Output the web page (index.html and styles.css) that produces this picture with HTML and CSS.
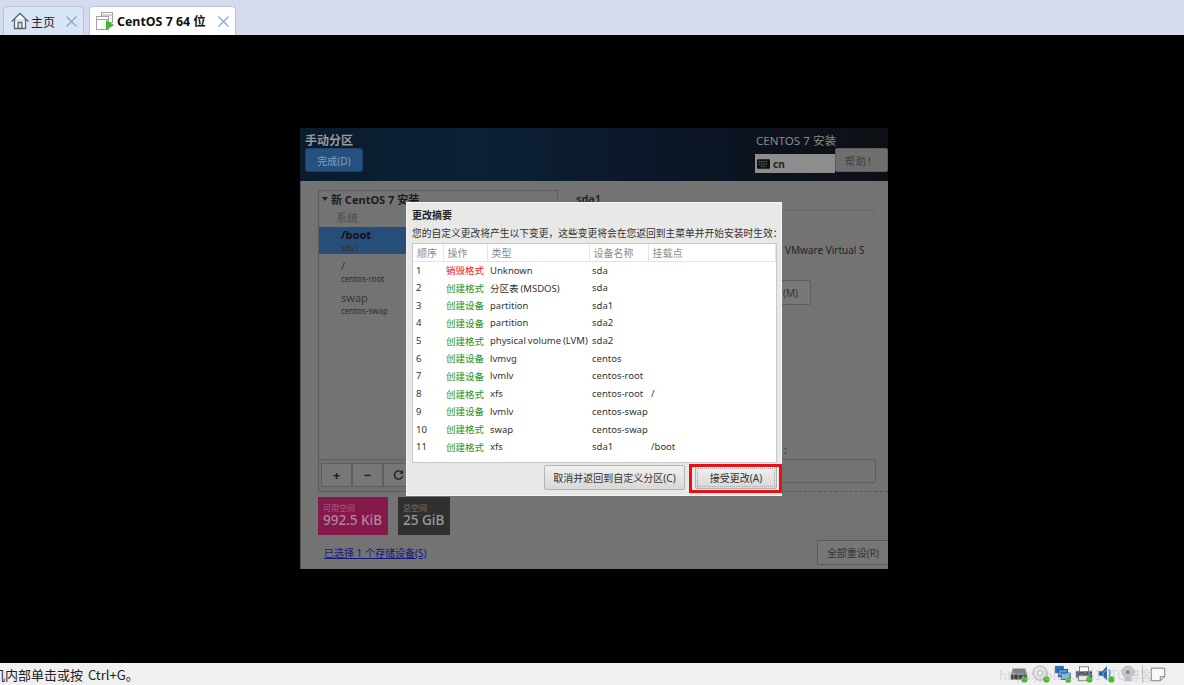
FILE: index.html
```html
<!DOCTYPE html>
<html lang="en">
<head>
    <meta charset="UTF-8">
    <meta name="viewport" content="width=device-width, initial-scale=1.0">
    <title>CentOS 7 64 位</title>
    <link rel="stylesheet" href="styles.css">
</head>
<body>
    <header class="tabbar">
        <div class="tab">
            <svg class="tab-icon" viewBox="0 0 18 18" width="18" height="18"><path d="M.7 9.500 9 1.500 17.300 9.500M3.500 7V16.500H14.500V7M7 16.500V10.500H11V16.500" fill="#fff" stroke="#5a6470" stroke-width="1.300"/></svg>
            <span class="tab-label">主页</span>
            <svg class="tab-close" viewBox="0 0 11 11" width="11" height="11"><path d="M.5.500 10.500 10.500M10.500.500.5 10.500" stroke="#86a5cc" stroke-width="1.200"/></svg>
        </div>
        <div class="tab tab-active">
            <svg class="tab-icon" viewBox="0 0 20 20" width="20" height="20"><rect x="6.500" y="1.500" width="11" height="10" fill="#fff" stroke="#a0a4aa"/><rect x="1.500" y="5.500" width="12" height="13" fill="#fff" stroke="#a0a4aa"/><path d="M1.500 8.500H13.500M6.500 4H17.500" stroke="#a0a4aa"/><path d="M11 9 19 14 11 19Z" fill="#3dbb2c"/></svg>
            <span class="tab-label tab-label-bold">CentOS 7 64 位</span>
            <svg class="tab-close" viewBox="0 0 11 11" width="11" height="11"><path d="M.5.500 10.500 10.500M10.500.500.5 10.500" stroke="#86a5cc" stroke-width="1.200"/></svg>
        </div>
    </header>

    <main class="screen">
        <section class="guest">
            <div class="guest-header">
                <div class="guest-header-left">
                    <h1 class="guest-title">手动分区</h1>
                    <button class="done-btn">完成(D)</button>
                </div>
                <div class="guest-header-right">
                    <div class="install-title">CENTOS 7 安装</div>
                    <div class="header-controls">
                        <div class="kbd-box">
                            <svg viewBox="0 0 14 10" width="13" height="10"><rect width="14" height="10" rx="1" fill="#111"/><path d="M2 2.500H12M2 5H12M4 7.500H10" stroke="#999" stroke-dasharray="1 1"/></svg>
                            <span>cn</span>
                        </div>
                        <button class="help-btn">帮助！</button>
                    </div>
                </div>
            </div>

            <div class="guest-body">
                <div class="left-col">
                    <div class="part-panel">
                        <div class="part-list">
                            <div class="part-heading"><span class="arrow"></span>新 CentOS 7 安装</div>
                            <div class="part-group">系统</div>
                            <div class="part-row part-row-on">
                                <div class="part-name">/boot</div>
                                <div class="part-dev">sda1</div>
                            </div>
                            <div class="part-row">
                                <div class="part-name">/</div>
                                <div class="part-dev">centos-root</div>
                            </div>
                            <div class="part-row">
                                <div class="part-name">swap</div>
                                <div class="part-dev">centos-swap</div>
                            </div>
                        </div>
                        <div class="part-tools">
                            <button class="tool-btn">+</button>
                            <button class="tool-btn">−</button>
                            <button class="tool-btn">
                                <svg viewBox="0 0 12 12" width="11" height="11"><path d="M10 3.200A4.500 4.500 0 1 0 10.500 6.500" fill="none" stroke="#1c1c1c" stroke-width="1.500"/><path d="M7 4H11V0Z" fill="#1c1c1c"/></svg>
                            </button>
                        </div>
                    </div>
                    <div class="space-tiles">
                        <div class="space-tile space-free">
                            <div class="space-label">可用空间</div>
                            <div class="space-value">992.5 KiB</div>
                        </div>
                        <div class="space-tile space-total">
                            <div class="space-label">总空间</div>
                            <div class="space-value">25 GiB</div>
                        </div>
                    </div>
                    <a class="device-link" href="#">已选择 1 个存储设备(S)</a>
                </div>

                <div class="right-col">
                    <div class="detail-title">sda1</div>
                    <div class="detail-device">VMware Virtual S</div>
                    <button class="modify-btn">(M)</button>
                    <div class="detail-colon">:</div>
                    <div class="detail-input"></div>
                    <div class="detail-dash"></div>
                    <button class="reset-btn">全部重设(R)</button>
                </div>
            </div>

            <div class="dialog">
                <div class="dialog-title">更改摘要</div>
                <p class="dialog-desc">您的自定义更改将产生以下变更，这些变更将会在您返回到主菜单并开始安装时生效：</p>
                <div class="changes">
                    <table class="changes-table">
                        <colgroup>
                            <col class="col-num"><col class="col-act"><col class="col-type"><col class="col-dev"><col>
                        </colgroup>
                        <thead>
                            <tr><th>顺序</th><th>操作</th><th>类型</th><th>设备名称</th><th>挂载点</th></tr>
                        </thead>
                        <tbody>
                            <tr><td>1</td><td class="act-del">销毁格式</td><td>Unknown</td><td>sda</td><td></td></tr>
                            <tr><td>2</td><td class="act-add">创建格式</td><td>分区表 (MSDOS)</td><td>sda</td><td></td></tr>
                            <tr><td>3</td><td class="act-add">创建设备</td><td>partition</td><td>sda1</td><td></td></tr>
                            <tr><td>4</td><td class="act-add">创建设备</td><td>partition</td><td>sda2</td><td></td></tr>
                            <tr><td>5</td><td class="act-add">创建格式</td><td>physical volume (LVM)</td><td>sda2</td><td></td></tr>
                            <tr><td>6</td><td class="act-add">创建设备</td><td>lvmvg</td><td>centos</td><td></td></tr>
                            <tr><td>7</td><td class="act-add">创建设备</td><td>lvmlv</td><td>centos-root</td><td></td></tr>
                            <tr><td>8</td><td class="act-add">创建格式</td><td>xfs</td><td>centos-root</td><td>/</td></tr>
                            <tr><td>9</td><td class="act-add">创建设备</td><td>lvmlv</td><td>centos-swap</td><td></td></tr>
                            <tr><td>10</td><td class="act-add">创建格式</td><td>swap</td><td>centos-swap</td><td></td></tr>
                            <tr><td>11</td><td class="act-add">创建格式</td><td>xfs</td><td>sda1</td><td>/boot</td></tr>
                        </tbody>
                    </table>
                </div>
                <div class="dialog-actions">
                    <button class="dlg-btn dlg-cancel">取消并返回到自定义分区(C)</button>
                    <button class="dlg-btn dlg-accept">接受更改(A)</button>
                </div>
            </div>
            <div class="highlight"></div>
        </section>
    </main>

    <footer class="statusbar">
        <span class="status-text">机内部单击或按 Ctrl+G。</span>
        <div class="tray">
            <svg viewBox="0 0 20 20" width="18" height="18"><path d="M3 4H17L19 11V16H1V11Z" fill="#7c8288"/><rect x="1" y="11" width="18" height="5" fill="#3c4248"/><circle cx="16" cy="16" r="3.500" fill="#4bb336"/></svg>
            <svg viewBox="0 0 20 20" width="18" height="18"><circle cx="9" cy="9" r="8" fill="#dfe3e8" stroke="#a8adb3"/><circle cx="9" cy="9" r="2.500" fill="#fff" stroke="#a8adb3"/><circle cx="16" cy="16" r="3.500" fill="#4bb336"/></svg>
            <svg viewBox="0 0 20 20" width="18" height="18"><rect x="1" y="1" width="10" height="8" fill="#2c6fb8"/><rect x="5" y="5" width="10" height="8" fill="#4f97d8" stroke="#1f4f88"/><rect x="8" y="9" width="10" height="7" fill="#7bb8e8" stroke="#1f4f88"/><circle cx="16" cy="17" r="3" fill="#4bb336"/></svg>
            <svg viewBox="0 0 20 20" width="18" height="18"><rect x="5" y="2" width="10" height="6" fill="#fff" stroke="#777"/><rect x="1" y="7" width="18" height="7" fill="#50565c"/><rect x="4" y="12" width="12" height="5" fill="#fff" stroke="#777"/><circle cx="16" cy="16" r="3.500" fill="#4bb336"/></svg>
            <svg viewBox="0 0 20 20" width="18" height="18"><path d="M2 7H6L11 1V17L6 12H2Z" fill="#2a62a8"/><path d="M13 5Q16 9 13 13" fill="none" stroke="#5a8fcc" stroke-width="1.500"/><circle cx="16" cy="16" r="3.500" fill="#4bb336"/></svg>
            <svg viewBox="0 0 20 20" width="18" height="18"><circle cx="10" cy="8" r="6.500" fill="#c8ced4" stroke="#a8adb3"/><circle cx="10" cy="8" r="2.500" fill="#7f8a96"/><path d="M5 18H15L12 14H8Z" fill="#b8bec4"/></svg>
            <span class="tray-sep"></span>
            <svg viewBox="0 0 20 20" width="18" height="18"><path d="M2.500 3.500H17.500V13L12.500 17.500H2.500Z" fill="#f8f8f8" stroke="#70757a"/><path d="M12.500 17.500V13H17.500" fill="none" stroke="#70757a"/></svg>
        </div>
        <span class="watermark">https://blog.@51CTO博客</span>
    </footer>
</body>
</html>
```

FILE: styles.css
```css
* {
    box-sizing: border-box;
}

body {
    font-family: "Noto Sans", "Noto Sans CJK SC", sans-serif;
    margin: 0;
    height: 685px;
    overflow: hidden;
    display: flex;
    flex-direction: column;
    background: #000;
}

button {
    font-family: inherit;
    padding: 0;
}

/* tabs */
.tabbar {
    height: 35px;
    flex: none;
    background: #d5dbed;
    display: flex;
    align-items: flex-end;
    gap: 5px;
    padding-left: 3px;
}

.tab {
    height: 29px;
    width: 81px;
    display: flex;
    align-items: center;
    padding-left: 7px;
    background: #d9e5f5;
    border: 1px solid #b4c6de;
    border-bottom: none;
    border-radius: 4px 4px 0 0;
    font-family: "Noto Sans CJK SC", sans-serif;
    font-size: 12px;
    color: #222;
}

.tab-active {
    width: 147px;
    background: #fff;
    padding-left: 5px;
}

.tab-icon {
    flex: none;
    margin-right: 2px;
}

.tab-label {
    white-space: nowrap;
}

.tab-label-bold {
    font-family: "Noto Sans", "Noto Sans CJK SC", sans-serif;
    font-weight: 700;
    font-size: 12.400px;
    color: #111;
}

.tab-close {
    flex: none;
    margin-left: auto;
    margin-right: 6px;
}

/* vm screen */
.screen {
    flex: 1;
    background: #000;
    padding: 93px 0 0 300px;
    min-height: 0;
}

.guest {
    position: relative;
    width: 588px;
    height: 441px;
    background: #737373;
    font-size: 10px;
    color: #2a2a2a;
}

.guest-header {
    height: 53px;
    background: linear-gradient(90deg, #0b1b2e 0%, #0c2036 30%, #0b1626 65%, #0e0f14 100%);
    display: flex;
    justify-content: space-between;
    padding: 5px 0 0 5px;
}

.guest-title {
    margin: 0;
    font-size: 12px;
    line-height: 15px;
    font-weight: 700;
    color: #9a9a9a;
}

.done-btn {
    display: block;
    width: 58px;
    height: 24px;
    background: #25517f;
    border: 1px solid #1d4368;
    border-radius: 3px;
    color: #86a0bb;
    font-size: 10px;
}

.install-title {
    font-size: 11.600px;
    line-height: 15px;
    color: #8b8b8b;
    padding-left: 1px;
}

.header-controls {
    display: flex;
    align-items: flex-start;
    height: 25px;
}

.kbd-box {
    width: 80px;
    height: 19px;
    margin-top: 6px;
    background: #8d8d8d;
    display: flex;
    align-items: center;
    gap: 3px;
    padding-left: 2px;
    font-size: 10px;
    font-weight: 700;
    color: #222;
}

.help-btn {
    width: 53px;
    height: 24px;
    background: #6f6f6f;
    border: 1px solid #5e5e5e;
    border-radius: 2px;
    color: #3e3e3e;
    font-size: 10px;
    letter-spacing: 1px;
}

.guest-body {
    display: flex;
    height: 388px;
    border-left: 1px solid #4f4f4f;
}

.left-col {
    width: 257px;
    padding: 9px 0 0 17px;
}

.part-panel {
    width: 240px;
    height: 302px;
    border: 1px solid #5c5c5c;
    display: flex;
    flex-direction: column;
}

.part-list {
    flex: 1;
}

.part-heading {
    height: 16px;
    padding-left: 3px;
    font-size: 11px;
    font-weight: 700;
    line-height: 15px;
    color: #1c1c1c;
    display: flex;
    align-items: center;
    gap: 3px;
}

.arrow {
    width: 0;
    height: 0;
    border: 3px solid transparent;
    border-top: 4px solid #222;
    border-bottom: none;
}

.part-group {
    height: 20px;
    line-height: 22px;
    padding-left: 17px;
    font-size: 11px;
    color: #4c4c4c;
}

.part-row {
    height: 31.500px;
    padding: 1px 0 0 22px;
}

.part-row-on {
    height: 27px;
    background: #274d79;
    margin-bottom: 4px;
}

.part-name {
    font-size: 11px;
    line-height: 14px;
    color: #3a3a3a;
}

.part-row-on .part-name {
    font-weight: 700;
    color: #111;
}

.part-dev {
    font-size: 8px;
    line-height: 12px;
    color: #2e2e2e;
}

.part-tools {
    height: 32px;
    border-top: 1px solid #5e5e5e;
    display: flex;
    padding: 3px 2px;
    background: #707070;
}

.tool-btn {
    width: 31px;
    height: 24px;
    background: #777;
    border: 1px solid #606060;
    font-size: 13px;
    font-weight: 700;
    color: #1c1c1c;
    display: flex;
    align-items: center;
    justify-content: center;
}

.space-tiles {
    display: flex;
    gap: 10px;
    margin-top: 5px;
}

.space-tile {
    height: 38px;
    padding: 6px 0 0 5px;
    color: #9a9a9a;
}

.space-free {
    width: 70px;
    background: #85194c;
    color: #b7849c;
}

.space-total {
    width: 52px;
    background: #303030;
}

.space-label {
    font-size: 8px;
    line-height: 9px;
    opacity: 0.7;
}

.space-value {
    font-size: 13.500px;
    line-height: 17px;
    font-weight: 500;
    white-space: nowrap;
}

.device-link {
    display: block;
    margin: 11px 0 0 6px;
    font-size: 10px;
    line-height: 14px;
    color: #15158a;
}

.right-col {
    position: relative;
    flex: 1;
}

.detail-title {
    margin: 9px 13px 0 18px;
    height: 21px;
    padding-top: 2px;
    border-bottom: 1px solid #666;
    font-size: 11px;
    line-height: 14px;
    font-weight: 600;
    color: #222;
}

.detail-device {
    margin: 32px 0 0 227px;
    font-size: 10px;
    line-height: 14px;
    color: #242424;
    white-space: nowrap;
    height: 14px;
}

.modify-btn {
    display: block;
    margin: 23px 0 0 200px;
    width: 53px;
    height: 25px;
    background: #787878;
    border: 1px solid #5e5e5e;
    border-radius: 2px;
    text-align: right;
    padding-right: 12px;
    font-size: 10px;
    color: #333;
}

.detail-colon {
    margin: 138px 0 0 226px;
    height: 16px;
    line-height: 14px;
}

.detail-input {
    margin-left: 200px;
    width: 118px;
    height: 24px;
    border: 1px solid #5e5e5e;
    border-radius: 2px;
}

.detail-dash {
    margin: 8px 0 0 200px;
    border-top: 1px dashed #5a5a5a;
}

.reset-btn {
    position: absolute;
    right: 0;
    bottom: 4px;
    width: 71px;
    height: 25px;
    background: #777;
    border: 1px solid #5a5a5a;
    border-right: none;
    border-radius: 2px 0 0 2px;
    font-size: 10px;
    color: #333;
}

/* modal */
.dialog {
    position: absolute;
    left: 106px;
    top: 74px;
    width: 376px;
    height: 294px;
    background: #e8e8e6;
    border: 1px solid #f5f5f5;
    padding: 6px 4px 0 5px;
}

.dialog-title {
    font-size: 10px;
    line-height: 13px;
    font-weight: 700;
    color: #222;
}

.dialog-desc {
    margin: 5px 0 3px;
    font-size: 9.750px;
    line-height: 13px;
    white-space: nowrap;
    color: #333;
}

.changes {
    height: 220px;
    background: #fff;
    border: 1px solid #c9c9c7;
}

.changes-table {
    width: 100%;
    table-layout: fixed;
    border-collapse: collapse;
    font-size: 9.500px;
}

.col-num {
    width: 30px;
}

.col-act {
    width: 44px;
}

.col-type {
    width: 102px;
}

.col-dev {
    width: 59px;
}

.changes-table th {
    height: 17px;
    padding: 0 0 0 4px;
    font-size: 10px;
    font-weight: 400;
    text-align: left;
    color: #8b8b8b;
    border-right: 1px solid #e4e4e4;
    border-bottom: 1px solid #e4e4e4;
    white-space: nowrap;
}

.changes-table td {
    height: 17.700px;
    padding: 0 0 0 3px;
    color: #333;
    white-space: nowrap;
    word-spacing: -0.500px;
}

.changes-table td.act-add {
    color: #1e9420;
}

.changes-table td.act-del {
    color: #f01818;
}

.dialog-actions {
    display: flex;
    justify-content: flex-end;
    align-items: center;
    gap: 10px;
    margin-top: 2px;
}

.dlg-btn {
    border: 1px solid #b4b4b2;
    border-radius: 2px;
    background: linear-gradient(#f0f0ee, #d8d8d6);
    font-size: 10px;
    color: #333;
}

.dlg-cancel {
    width: 141px;
    height: 25px;
}

.dlg-accept {
    width: 82px;
    height: 23px;
    outline: 1px dotted #a5a5a3;
    outline-offset: -3px;
}

.highlight {
    position: absolute;
    left: 389px;
    top: 336px;
    width: 93px;
    height: 29px;
    border: 3px solid #e80f17;
}

/* status bar */
.statusbar {
    height: 22px;
    flex: none;
    background: #f0f0f0;
    position: relative;
    display: flex;
    align-items: center;
    overflow: hidden;
    font-family: "Noto Sans CJK SC", sans-serif;
    font-size: 13px;
    color: #222;
}

.status-text {
    margin-left: -8px;
    white-space: nowrap;
    word-spacing: 2px;
}

.watermark {
    position: absolute;
    left: 999px;
    top: 2px;
    font-size: 13px;
    color: rgba(190, 190, 190, 0.55);
    white-space: nowrap;
}

.tray {
    margin-left: auto;
    display: flex;
    align-items: center;
    gap: 3.700px;
    padding-right: 17px;
}

.tray-sep {
    width: 1px;
    height: 18px;
    background: #bbb;
    margin: 0 2px;
}
```
